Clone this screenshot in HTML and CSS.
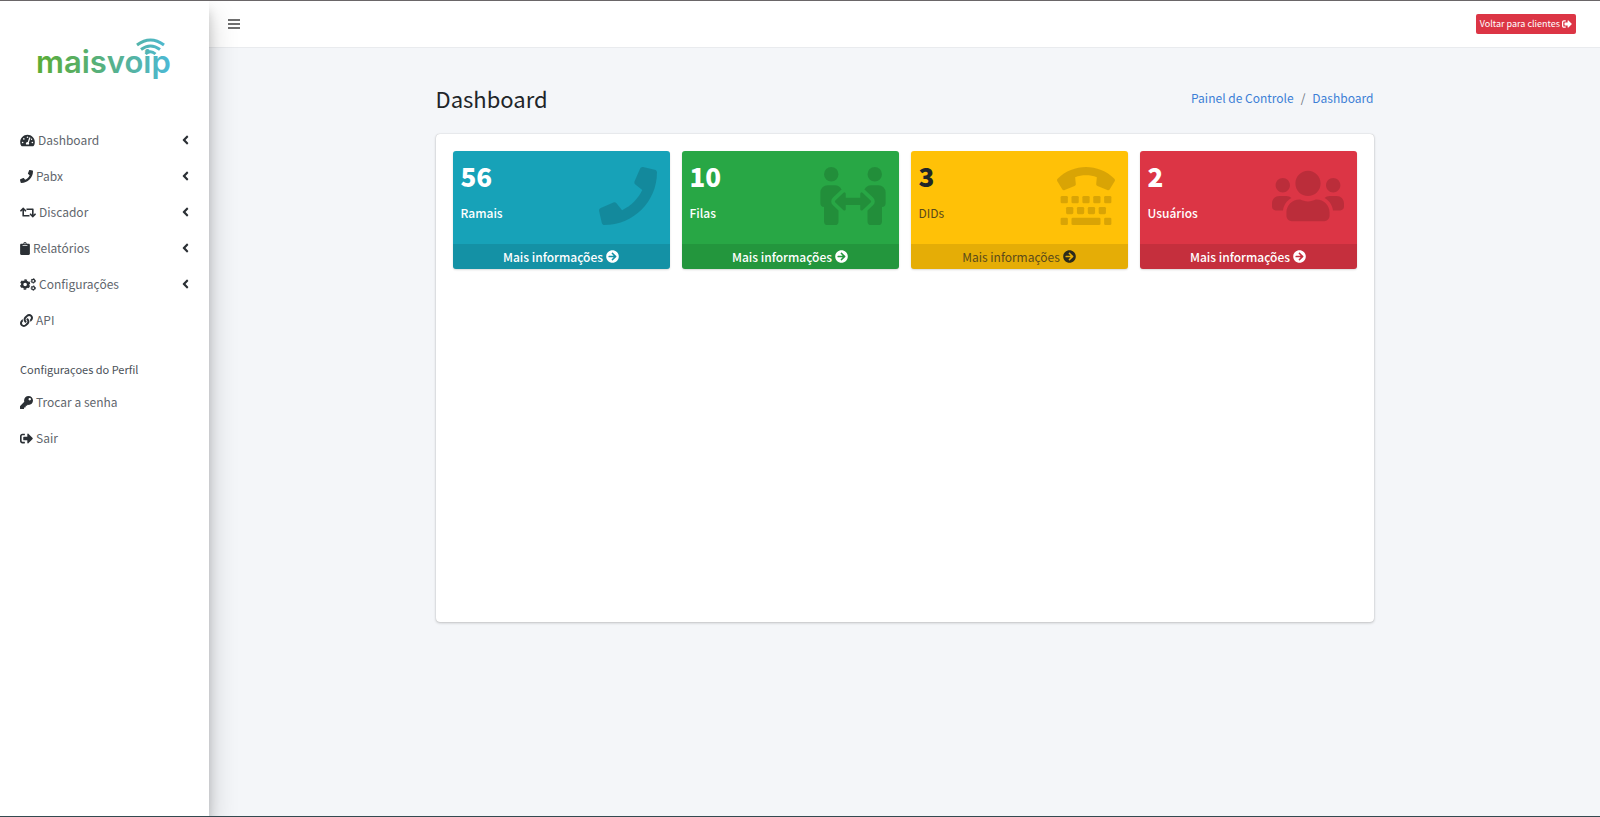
FILE: index.html
```html
<!DOCTYPE html>
<html lang="pt-BR">
<head>
<meta charset="utf-8">
<title>Maisvoip - Dashboard</title>
<link rel="stylesheet" href="styles.css">
</head>
<body>
<svg class="sprite" aria-hidden="true">
  <symbol id="phone" viewBox="0 0 512 512"><path d="M493.4 24.6l-104-24c-11.3-2.6-22.9 3.3-27.5 13.9l-48 112c-4.2 9.8-1.4 21.3 6.9 28l60.6 49.6c-36 76.7-98.9 140.5-177.2 177.2l-49.6-60.6c-6.8-8.3-18.2-11.1-28-6.9l-112 48C3.9 366.5-2 378.1.6 389.4l24 104C27.1 504.2 36.7 512 48 512c256.1 0 464-207.5 464-464 0-11.2-7.7-20.9-18.6-23.4z"/></symbol>
  <symbol id="people" viewBox="0 0 576 512"><path d="M96,128A64,64,0,1,0,32,64,64,64,0,0,0,96,128Zm0,176.08a44.11,44.11,0,0,1,13.64-32L181.77,204c1.65-1.55,3.77-2.31,5.61-3.57A63.91,63.91,0,0,0,128,160H64A64,64,0,0,0,0,224v96a32,32,0,0,0,32,32V480a32,32,0,0,0,32,32h64a32,32,0,0,0,32-32V383.61l-50.36-47.53A44.08,44.08,0,0,1,96,304.08ZM480,128a64,64,0,1,0-64-64A64,64,0,0,0,480,128Zm32,32H448a63.91,63.91,0,0,0-59.38,40.42c1.84,1.27,4,2,5.62,3.59l72.12,68.06a44.37,44.37,0,0,1,0,64L416,383.62V480a32,32,0,0,0,32,32h64a32,32,0,0,0,32-32V352a32,32,0,0,0,32-32V224A64,64,0,0,0,512,160ZM444.4,295.34l-72.12-68.06A12,12,0,0,0,352,236v36H224V236a12,12,0,0,0-20.28-8.73L131.6,295.34a12.4,12.4,0,0,0,0,17.47l72.12,68.07A12,12,0,0,0,224,372.14V336H352v36.14a12,12,0,0,0,20.28,8.74l72.12-68.07A12.4,12.4,0,0,0,444.4,295.34Z"/></symbol>
  <symbol id="tty" viewBox="0 0 512 512"><path d="M5.37 103.822c138.532-138.532 362.936-138.326 501.262 0 6.078 6.078 7.074 15.496 2.583 22.681l-43.214 69.138a18.332 18.332 0 0 1-22.356 7.305l-86.422-34.569a18.335 18.335 0 0 1-11.434-18.846L351.741 90c-62.145-22.454-130.636-21.986-191.483 0l5.953 59.532a18.331 18.331 0 0 1-11.434 18.846l-86.423 34.568a18.334 18.334 0 0 1-22.356-7.305L2.787 126.502a18.333 18.333 0 0 1 2.583-22.68z"/><rect x="32" y="256" width="64" height="64" rx="12"/><rect x="128" y="256" width="64" height="64" rx="12"/><rect x="224" y="256" width="64" height="64" rx="12"/><rect x="320" y="256" width="64" height="64" rx="12"/><rect x="416" y="256" width="64" height="64" rx="12"/><rect x="80" y="352" width="64" height="64" rx="12"/><rect x="176" y="352" width="64" height="64" rx="12"/><rect x="272" y="352" width="64" height="64" rx="12"/><rect x="368" y="352" width="64" height="64" rx="12"/><rect x="32" y="448" width="64" height="64" rx="12"/><rect x="128" y="448" width="256" height="64" rx="12"/><rect x="416" y="448" width="64" height="64" rx="12"/></symbol>
  <symbol id="users" viewBox="0 0 640 512"><path d="M96 224c35.3 0 64-28.7 64-64s-28.7-64-64-64-64 28.7-64 64 28.7 64 64 64zm448 0c35.3 0 64-28.7 64-64s-28.7-64-64-64-64 28.7-64 64 28.7 64 64 64zm32 32h-64c-17.6 0-33.5 7.1-45.1 18.6 40.3 22.1 68.9 62 75.1 109.4h66c17.7 0 32-14.3 32-32v-32c0-35.3-28.7-64-64-64zm-256 0c61.9 0 112-50.1 112-112S381.9 32 320 32 208 82.1 208 144s50.1 112 112 112zm76.8 32h-8.3c-20.8 10-43.9 16-68.5 16s-47.6-6-68.5-16h-8.3C179.6 288 128 339.6 128 403.2V432c0 26.5 21.5 48 48 48h288c26.5 0 48-21.5 48-48v-28.8c0-63.6-51.6-115.2-115.2-115.2zm-223.7-13.4C161.5 263.1 145.6 256 128 256H64c-35.3 0-64 28.7-64 64v32c0 17.7 14.3 32 32 32h65.9c6.3-47.4 34.9-87.3 75.2-109.4z"/></symbol>
  <symbol id="go" viewBox="0 0 512 512"><path d="M256 8c137 0 248 111 248 248S393 504 256 504 8 393 8 256 119 8 256 8zm-28.9 143.6l75.5 72.4H120c-13.3 0-24 10.7-24 24v16c0 13.3 10.7 24 24 24h182.6l-75.5 72.4c-9.7 9.3-9.9 24.8-.4 34.3l11 10.9c9.4 9.4 24.6 9.4 33.9 0L404.3 273c9.4-9.4 9.4-24.6 0-33.9L271.6 106.3c-9.4-9.4-24.6-9.4-33.9 0l-11 10.9c-9.5 9.6-9.3 25.1.4 34.4z"/></symbol>
  <symbol id="exit" viewBox="0 0 512 512"><path d="M497 273L329 441c-15 15-41 4.5-41-17v-96H152c-13.3 0-24-10.7-24-24v-96c0-13.3 10.7-24 24-24h136V88c0-21.4 25.9-32 41-17l168 168c9.3 9.4 9.3 24.6 0 34zM192 436v-40c0-6.6-5.4-12-12-12H96c-17.7 0-32-14.3-32-32V160c0-17.7 14.3-32 32-32h84c6.6 0 12-5.4 12-12V76c0-6.6-5.4-12-12-12H96c-53 0-96 43-96 96v192c0 53 43 96 96 96h84c6.6 0 12-5.4 12-12z"/></symbol>
  <symbol id="key" viewBox="0 0 512 512"><path d="M512 176.001C512 273.203 433.202 352 336 352c-11.22 0-22.19-1.062-32.827-3.069l-24.012 27.014A23.999 23.999 0 0 1 261.223 384H224v40c0 13.255-10.745 24-24 24h-40v40c0 13.255-10.745 24-24 24H24c-13.255 0-24-10.745-24-24v-78.059c0-6.365 2.529-12.47 7.029-16.971l161.802-161.802C163.108 213.814 160 195.271 160 176 160 78.798 238.797.001 335.999 0 433.488-.001 512 78.511 512 176.001zM336 128c0 26.51 21.49 48 48 48s48-21.49 48-48-21.49-48-48-48-48 21.49-48 48z"/></symbol>
  <symbol id="link" viewBox="0 0 512 512"><path d="M326.612 185.391c59.747 59.809 58.927 155.698.36 214.59-.11.12-.24.25-.36.37l-67.2 67.2c-59.27 59.27-155.699 59.262-214.96 0-59.27-59.26-59.27-155.7 0-214.96l37.106-37.106c9.84-9.84 26.786-3.3 27.294 10.606.648 17.722 3.826 35.527 9.69 52.721 1.986 5.822.567 12.262-3.783 16.612l-13.087 13.087c-28.026 28.026-28.905 73.66-1.155 101.96 28.024 28.579 74.086 28.749 102.325.51l67.2-67.19c28.191-28.191 28.073-73.757 0-101.83-3.701-3.694-7.429-6.564-10.341-8.569a16.037 16.037 0 0 1-6.947-12.606c-.396-10.567 3.348-21.456 11.698-29.806l21.054-21.055c5.521-5.521 14.182-6.199 20.584-1.731a152.482 152.482 0 0 1 20.522 17.197zM467.547 44.449c-59.261-59.262-155.69-59.27-214.96 0l-67.2 67.2c-.12.12-.25.25-.36.37-58.566 58.892-59.387 154.781.36 214.59a152.454 152.454 0 0 0 20.521 17.196c6.402 4.468 15.064 3.789 20.584-1.731l21.054-21.055c8.35-8.35 12.094-19.239 11.698-29.806a16.037 16.037 0 0 0-6.947-12.606c-2.912-2.005-6.64-4.875-10.341-8.569-28.073-28.073-28.191-73.639 0-101.83l67.2-67.19c28.239-28.239 74.3-28.069 102.325.51 27.75 28.3 26.872 73.934-1.155 101.96l-13.087 13.087c-4.35 4.35-5.769 10.79-3.783 16.612 5.864 17.194 9.042 34.999 9.69 52.721.509 13.906 17.454 20.446 27.294 10.606l37.106-37.106c59.271-59.259 59.271-155.699.001-214.959z"/></symbol>
  <symbol id="cogs" viewBox="0 0 640 512"><g fill="none" stroke="currentColor"><circle cx="205" cy="256" r="118" stroke-width="92"/><circle cx="205" cy="256" r="176" stroke-width="60" stroke-dasharray="104 80.3" stroke-dashoffset="-40"/><circle cx="530" cy="112" r="62" stroke-width="48"/><circle cx="530" cy="112" r="92" stroke-width="30" stroke-dasharray="56 40.3"/><circle cx="530" cy="400" r="62" stroke-width="48"/><circle cx="530" cy="400" r="92" stroke-width="30" stroke-dasharray="56 40.3"/></g></symbol>
  <symbol id="clipboard" viewBox="0 0 384 512"><path d="M384 112v352c0 26.51-21.49 48-48 48H48c-26.51 0-48-21.49-48-48V112c0-26.51 21.49-48 48-48h80c0-35.29 28.71-64 64-64s64 28.71 64 64h80c26.51 0 48 21.49 48 48zM192 40c-13.255 0-24 10.745-24 24s10.745 24 24 24 24-10.745 24-24-10.745-24-24-24m96 114v-20a6 6 0 0 0-6-6H102a6 6 0 0 0-6 6v20a6 6 0 0 0 6 6h180a6 6 0 0 0 6-6z"/></symbol>
  <symbol id="retweet" viewBox="0 0 640 512"><path d="M629.657 343.598L528.971 444.284c-9.373 9.372-24.568 9.372-33.941 0L394.343 343.598c-9.373-9.373-9.373-24.569 0-33.941l10.823-10.823c9.562-9.562 25.133-9.34 34.419.492L480 342.118V160H292.451a24.005 24.005 0 0 1-16.971-7.029l-16-16C244.361 121.851 255.069 96 276.451 96H520c13.255 0 24 10.745 24 24v222.118l40.416-42.792c9.285-9.831 24.856-10.054 34.419-.492l10.823 10.823c9.372 9.372 9.372 24.569-.001 33.941zm-265.138 15.431A23.999 23.999 0 0 0 347.548 352H160V169.881l40.416 42.792c9.286 9.831 24.856 10.054 34.419.491l10.822-10.822c9.373-9.373 9.373-24.569 0-33.941L144.971 67.716c-9.373-9.373-24.569-9.373-33.941 0L10.343 168.402c-9.373 9.373-9.373 24.569 0 33.941l10.822 10.822c9.562 9.562 25.133 9.34 34.419-.491L96 169.881V392c0 13.255 10.745 24 24 24h243.549c21.382 0 32.09-25.851 16.971-40.971l-16.001-16z"/></symbol>
  <symbol id="gauge" viewBox="0 0 576 512"><path d="M288 32C128.94 32 0 160.94 0 320c0 52.8 14.25 102.26 39.06 144.8 5.61 9.62 16.3 15.2 27.44 15.2h443c11.14 0 21.83-5.58 27.44-15.2C561.75 422.26 576 372.8 576 320c0-159.06-128.94-288-288-288z"/><g fill="#fff"><circle cx="288" cy="128" r="32"/><circle cx="144" cy="192" r="32"/><circle cx="96" cy="336" r="32"/><circle cx="480" cy="336" r="32"/><circle cx="448" cy="208" r="28"/><path d="M360 130l46 14-66 196a64 64 0 0 1 4 76H232a64 64 0 0 1 62-96z"/></g></symbol>
  <symbol id="angle" viewBox="0 0 256 512"><path d="M31.7 239l136-136c9.4-9.4 24.6-9.4 33.9 0l22.6 22.6c9.4 9.4 9.4 24.6 0 33.9L127.9 256l96.4 96.4c9.4 9.4 9.4 24.6 0 33.9L201.7 409c-9.4 9.4-24.6 9.4-33.9 0l-136-136c-9.5-9.4-9.5-24.6-.1-34z"/></symbol>
  <symbol id="bars" viewBox="0 0 12 12"><path d="M0 1h12v2H0zM0 5h12v2H0zM0 9h12v2H0z"/></symbol>
</svg>

<div class="app">
  <aside class="sidebar">
    <a class="brand" href="#" aria-label="maisvoip">
      <svg class="logo" viewBox="0 0 136 46" width="136" height="46">
        <defs><linearGradient id="brand" gradientUnits="userSpaceOnUse" x1="0" y1="0" x2="136" y2="0"><stop offset="0" stop-color="#5bac35"/><stop offset=".3" stop-color="#58ae62"/><stop offset=".7" stop-color="#55b3a2"/><stop offset="1" stop-color="#4bb9d8"/></linearGradient></defs>
        <text class="logo-text" x="0" y="36" fill="url(#brand)">maisvoip</text>
        <g fill="none" stroke="url(#brand)" stroke-width="3"><path d="M101 8Q114.500-2 128 8"/><path d="M105 12.500Q114.500 5.500 124 12.500"/><path d="M109.500 17Q114.500 12.500 119.500 17"/></g>
      </svg>
    </a>
    <nav class="menu">
      <a class="item" href="#"><svg class="icon w15"><use href="#gauge"/></svg><span>Dashboard</span><svg class="caret"><use href="#angle"/></svg></a>
      <a class="item" href="#"><svg class="icon w13"><use href="#phone"/></svg><span>Pabx</span><svg class="caret"><use href="#angle"/></svg></a>
      <a class="item" href="#"><svg class="icon w16"><use href="#retweet"/></svg><span>Discador</span><svg class="caret"><use href="#angle"/></svg></a>
      <a class="item" href="#"><svg class="icon w10"><use href="#clipboard"/></svg><span>Relatórios</span><svg class="caret"><use href="#angle"/></svg></a>
      <a class="item" href="#"><svg class="icon w16"><use href="#cogs"/></svg><span>Configurações</span><svg class="caret"><use href="#angle"/></svg></a>
      <a class="item" href="#"><svg class="icon w13"><use href="#link"/></svg><span>API</span></a>
      <h2 class="menu-title">Configuraçoes do Perfil</h2>
      <a class="item" href="#"><svg class="icon w13"><use href="#key"/></svg><span>Trocar a senha</span></a>
      <a class="item" href="#"><svg class="icon w13"><use href="#exit"/></svg><span>Sair</span></a>
    </nav>
  </aside>

  <div class="main">
    <header class="topbar">
      <button class="toggle" type="button" aria-label="Menu"><svg class="bars"><use href="#bars"/></svg></button>
      <button class="back" type="button">Voltar para clientes<svg class="back-icon"><use href="#exit"/></svg></button>
    </header>
    <main class="content">
      <div class="heading">
        <h1 class="title">Dashboard</h1>
        <nav class="crumbs"><a href="#">Painel de Controle</a><span class="slash">/</span><a href="#">Dashboard</a></nav>
      </div>
      <section class="panel">
        <article class="box info">
          <div class="inner"><div><strong class="count">56</strong><p class="label">Ramais</p></div><svg class="art w58"><use href="#phone"/></svg></div>
          <a class="more" href="#">Mais informações<svg class="go"><use href="#go"/></svg></a>
        </article>
        <article class="box success">
          <div class="inner"><div><strong class="count">10</strong><p class="label">Filas</p></div><svg class="art w66"><use href="#people"/></svg></div>
          <a class="more" href="#">Mais informações<svg class="go"><use href="#go"/></svg></a>
        </article>
        <article class="box warning">
          <div class="inner"><div><strong class="count">3</strong><p class="label">DIDs</p></div><svg class="art w58"><use href="#tty"/></svg></div>
          <a class="more" href="#">Mais informações<svg class="go"><use href="#go"/></svg></a>
        </article>
        <article class="box danger">
          <div class="inner"><div><strong class="count">2</strong><p class="label">Usuários</p></div><svg class="art w72"><use href="#users"/></svg></div>
          <a class="more" href="#">Mais informações<svg class="go"><use href="#go"/></svg></a>
        </article>
      </section>
    </main>
  </div>
</div>
</body>
</html>
```
FILE: styles.css
```css
* { box-sizing: border-box; }

body {
  margin: 0;
  font-family: "Noto Sans CJK SC", "Noto Sans", sans-serif;
  font-size: 12px;
  line-height: 20px;
  color: #212529;
  background: #f4f6f9;
}

a { color: inherit; text-decoration: none; }
svg { fill: currentColor; flex: none; }
.sprite { display: none; }

.app {
  display: flex;
  min-height: 100vh;
  border-top: 1px solid #6a6668;
  border-bottom: 1px solid #344a50;
}

.sidebar {
  position: relative;
  z-index: 1;
  flex: none;
  width: 209px;
  background: #fff;
  clip-path: inset(0 -60px 0 0);
  box-shadow: 0 14px 28px rgba(0, 0, 0, .2), 0 10px 10px rgba(0, 0, 0, .16);
}

.brand { display: block; padding: 36px 36px 39px; }
.logo { display: block; overflow: visible; }
.logo-text {
  font-family: Inter, sans-serif;
  font-size: 31px;
  font-weight: 600;
}

.menu { display: flex; flex-direction: column; padding: 0 20px; }
.item { display: flex; align-items: center; gap: 3px; height: 36px; color: #5f666d; }
.icon { height: 13px; color: #2b3035; }
.caret { width: 7px; height: 14px; margin-left: auto; color: #2b3035; }
.w10 { width: 10px; }
.w13 { width: 13px; }
.w15 { width: 15px; }
.w16 { width: 16px; }
.menu-title { margin: 21px 0 5px; font-size: 11px; font-weight: 400; line-height: 20px; color: #495057; }

.main { flex: 1; min-width: 0; }

.topbar {
  display: flex;
  align-items: center;
  justify-content: space-between;
  height: 47px;
  padding: 0 24px 0 19px;
  background: #fff;
  border-bottom: 1px solid #e9ebee;
}
.toggle { display: flex; padding: 0; border: 0; background: none; color: #6f6f6f; }
.bars { width: 12px; height: 12px; }
.back {
  display: flex;
  align-items: center;
  gap: 2px;
  height: 20px;
  padding: 0 4px;
  border: 0;
  border-radius: 2px;
  font: 400 9px/20px "Noto Sans CJK SC", sans-serif;
  color: #fff;
  background: #dc3545;
}
.back-icon { width: 10px; height: 10px; }

.content { max-width: 938px; margin: 0 auto; padding-top: 32px; }
.heading { display: flex; justify-content: space-between; align-items: flex-start; height: 54px; }
.title { margin: 0; font-size: 22px; font-weight: 400; line-height: 36px; }
.crumbs { display: flex; gap: 7px; padding-top: 8px; color: #3c7fd6; }
.slash { color: #6c757d; }

.panel {
  display: grid;
  grid-template-columns: repeat(4, 1fr);
  gap: 12px;
  align-content: start;
  min-height: 488px;
  padding: 17px;
  border-radius: 4px;
  background: #fff;
  box-shadow: 0 0 1px rgba(0, 0, 0, .25), 0 1px 3px rgba(0, 0, 0, .2);
}

.box { border-radius: 3px; overflow: hidden; color: #fff; box-shadow: 0 1px 2px rgba(0, 0, 0, .15); }
.info { background: #17a2b8; }
.success { background: #28a745; }
.warning { background: #ffc107; color: #1f2d3d; }
.danger { background: #dc3545; }

.inner { display: flex; justify-content: space-between; height: 93px; padding: 8px 13px 0 8px; }
.count { display: block; font-size: 26px; font-weight: 900; line-height: 34px; }
.label { margin: 10px 0 0; line-height: 20px; }
.art { height: 58px; margin-top: 8px; color: rgba(0, 0, 0, .15); }
.w58 { width: 58px; }
.w66 { width: 66px; }
.w72 { width: 72px; }
.more { display: flex; align-items: center; justify-content: center; gap: 3px; height: 25px; background: rgba(0, 0, 0, .1); }
.go { width: 13px; height: 13px; }
.info .label, .success .label, .danger .label,
.info .more, .success .more, .danger .more { font-weight: 500; }
.warning .count { color: #212529; }
.warning .label, .warning .more { color: #5a4a1a; }
.warning .go { color: #2b2a1c; }
```
